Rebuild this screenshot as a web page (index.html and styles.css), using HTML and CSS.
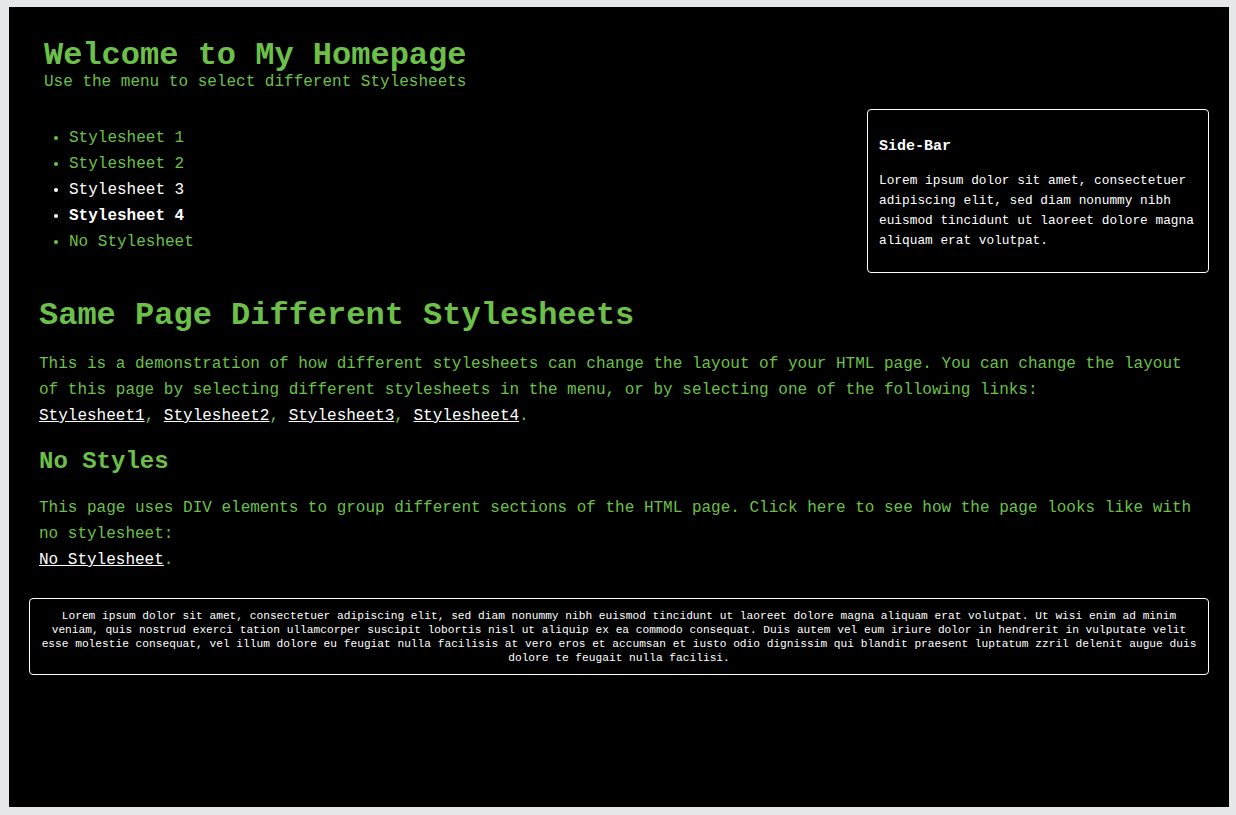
FILE: index.html
```html
<!DOCTYPE html>
<html>
<head>
<meta charset="utf-8">
<title>Welcome to My Homepage</title>
<link rel="stylesheet" href="styles.css">
</head>
<body>
<div class="page">
  <div class="header">
    <h1 class="title">Welcome to My Homepage</h1>
    <div class="subtitle">Use the menu to select different Stylesheets</div>
  </div>
  <div class="row">
    <ul class="menu">
      <li class="green">Stylesheet 1</li>
      <li class="green">Stylesheet 2</li>
      <li class="white">Stylesheet 3</li>
      <li class="white bold">Stylesheet 4</li>
      <li class="green">No Stylesheet</li>
    </ul>
    <div class="sidebar">
      <h3 class="side-title">Side-Bar</h3>
      <p class="side-text">Lorem ipsum dolor sit amet, consectetuer adipiscing elit, sed diam nonummy nibh euismod tincidunt ut laoreet dolore magna aliquam erat volutpat.</p>
    </div>
  </div>
  <div class="main">
    <h2 class="main-title">Same Page Different Stylesheets</h2>
    <p class="text">This is a demonstration of how different stylesheets can change the layout of your HTML page. You can change the layout of this page by selecting different stylesheets in the menu, or by selecting one of the following links:<br><a href="#">Stylesheet1</a>, <a href="#">Stylesheet2</a>, <a href="#">Stylesheet3</a>, <a href="#">Stylesheet4</a>.</p>
    <h3 class="sub-title">No Styles</h3>
    <p class="text">This page uses DIV elements to group different sections of the HTML page. Click here to see how the page looks like with no stylesheet:<br><a href="#">No Stylesheet</a>.</p>
  </div>
  <div class="footer">Lorem ipsum dolor sit amet, consectetuer adipiscing elit, sed diam nonummy nibh euismod tincidunt ut laoreet dolore magna aliquam erat volutpat. Ut wisi enim ad minim veniam, quis nostrud exerci tation ullamcorper suscipit lobortis nisl ut aliquip ex ea commodo consequat. Duis autem vel eum iriure dolor in hendrerit in vulputate velit esse molestie consequat, vel illum dolore eu feugiat nulla facilisis at vero eros et accumsan et iusto odio dignissim qui blandit praesent luptatum zzril delenit augue duis dolore te feugait nulla facilisi.</div>
</div>
</body>
</html>
```

FILE: styles.css
```css
html, body {
  margin: 0;
  padding: 0;
  background: #e6e7e9;
}

body {
  font-family: "Liberation Mono", "Courier New", monospace;
  color: #6cc04a;
}

.page {
  box-sizing: border-box;
  width: 1220px;
  height: 800px;
  margin: 7px 7px 8px 9px;
  background: #000;
  padding: 31px 20px 20px 20px;
}

.header {
  padding-left: 15px;
}

.title {
  margin: 0;
  font-size: 32px;
  line-height: 35px;
  font-weight: bold;
  color: #6cc04a;
}

.subtitle {
  font-size: 16px;
  line-height: 18px;
}

.row {
  display: flex;
  justify-content: space-between;
  align-items: flex-start;
}

.menu {
  margin: 34px 0 0 0;
  padding-left: 40px;
  font-size: 16px;
  line-height: 26px;
}

.green { color: #6cc04a; }
.white { color: #fff; }
.bold { font-weight: bold; }

.sidebar {
  box-sizing: border-box;
  width: 342px;
  margin-top: 18px;
  border: 1px solid #fff;
  border-radius: 4px;
  padding: 28px 6px 21px 11px;
  color: #fff;
}

.side-title {
  margin: 0 0 15px 0;
  font-size: 15px;
  line-height: 18px;
  font-weight: bold;
}

.side-text {
  margin: 0;
  font-size: 12.8px;
  line-height: 20px;
}

.main {
  margin-top: 25px;
  padding: 0 10px;
}

.main-title {
  margin: 0 0 17px 0;
  font-size: 32px;
  line-height: 36px;
  font-weight: bold;
}

.sub-title {
  margin: 19px 0 19px 0;
  font-size: 24px;
  line-height: 28px;
  font-weight: bold;
}

.text {
  margin: 0;
  font-size: 16px;
  line-height: 26px;
}

.text a {
  color: #fff;
  text-decoration: underline;
}

.footer {
  margin-top: 25px;
  border: 1px solid #fff;
  border-radius: 4px;
  padding: 10px 10px 9px 10px;
  color: #fff;
  font-size: 11.2px;
  line-height: 14px;
  text-align: center;
}
```
